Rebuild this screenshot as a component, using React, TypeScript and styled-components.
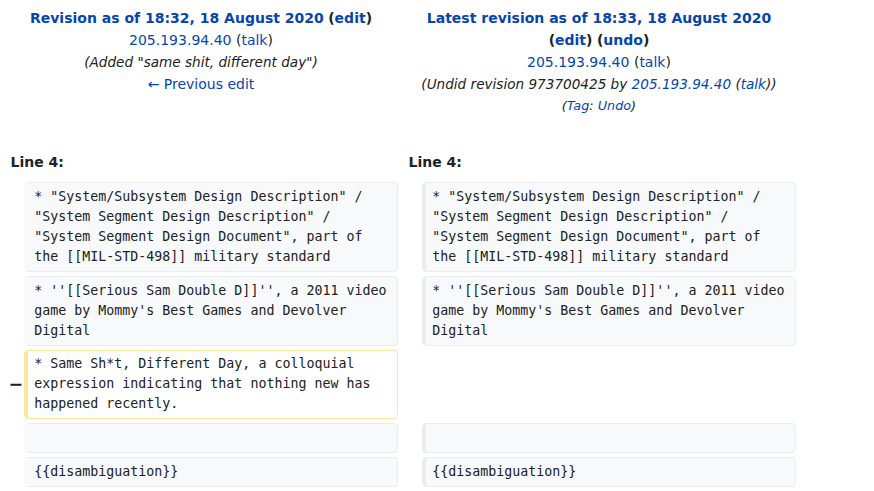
import React from "react";
import styled, { createGlobalStyle, css } from "styled-components";

const GlobalStyle = createGlobalStyle`
  html, body {
    margin: 0;
    padding: 0;
    background: #ffffff;
  }
  body {
    font-family: "DejaVu Sans", "Liberation Sans", sans-serif;
    color: #202122;
  }
`;

const DiffGrid = styled.div`
  display: grid;
  grid-template-columns: 15.6px 374.4px 15.6px 374.4px;
  column-gap: 4px;
  row-gap: 4px;
  padding: 4px;
  width: 792px;
`;

const HeaderCell = styled.div`
  grid-column: span 2;
  text-align: center;
  font-size: 14px;
  line-height: 22px;
  padding: 3px 0 24px;
`;

const HeaderLine = styled.div``;

const Link = styled.a<{ $bold?: boolean }>`
  color: #0645ad;
  text-decoration: none;
  font-weight: ${(p) => (p.$bold ? 700 : 400)};
  cursor: pointer;
`;

const Paren = styled.span<{ $bold?: boolean }>`
  font-weight: ${(p) => (p.$bold ? 700 : 400)};
  color: #202122;
`;

const Comment = styled.span`
  font-style: italic;
  font-size: 13.6px;
  color: #202122;
`;

const TagLine = styled.div`
  font-size: 12.8px;
  font-style: italic;
`;

const LineNo = styled.div`
  grid-column: span 2;
  font-size: 14px;
  font-weight: 700;
  line-height: 22px;
  padding: 6px 0 5px 6.5px;
`;

const Marker = styled.div`
  display: flex;
  align-items: center;
  justify-content: flex-end;
  font-size: 17.5px;
  font-weight: 700;
  color: #202122;
`;

const MarkerGlyph = styled.span`
  margin-right: -3.6px;
`;

type Variant = "contextLeft" | "contextRight" | "deleted";

const variantStyles: Record<Variant, ReturnType<typeof css>> = {
  contextLeft: css`
    background: #f8f9fa;
    border-color: #eaecf0;
    border-left-color: #f8f9fa;
  `,
  contextRight: css`
    background: #f8f9fa;
    border-color: #eaecf0;
  `,
  deleted: css`
    background: #ffffff;
    border-color: #ffe49c;
  `,
};

const Content = styled.div<{ $variant: Variant }>`
  font-family: "DejaVu Sans Mono", "Liberation Mono", monospace;
  font-size: 13.3px;
  line-height: 20px;
  white-space: pre-wrap;
  overflow-wrap: break-word;
  border-style: solid;
  border-width: 1px 1px 1px 4px;
  border-radius: 4.4px;
  padding: 3.9px 6.65px;
  color: #202122;
  ${(p) => variantStyles[p.$variant]}
`;

const Empty = styled.div`
  grid-column: span 2;
`;

const rows: { left: string; right: string | null }[] = [
  {
    left: `* "System/Subsystem Design Description" / "System Segment Design Description" / "System Segment Design Document", part of the [[MIL-STD-498]] military standard`,
    right: `* "System/Subsystem Design Description" / "System Segment Design Description" / "System Segment Design Document", part of the [[MIL-STD-498]] military standard`,
  },
  {
    left: `* ''[[Serious Sam Double D]]'', a 2011 video game by Mommy's Best Games and Devolver Digital`,
    right: `* ''[[Serious Sam Double D]]'', a 2011 video game by Mommy's Best Games and Devolver Digital`,
  },
  {
    left: `* Same Sh*t, Different Day, a colloquial expression indicating that nothing new has happened recently.`,
    right: null,
  },
  { left: "", right: "" },
  { left: "{{disambiguation}}", right: "{{disambiguation}}" },
];

export default function App() {
  return (
    <>
      <GlobalStyle />
      <DiffGrid>
        <HeaderCell>
          <HeaderLine>
            <Link $bold>Revision as of 18:32, 18 August 2020</Link>{" "}
            <Paren $bold>(</Paren>
            <Link $bold>edit</Link>
            <Paren $bold>)</Paren>
          </HeaderLine>
          <HeaderLine>
            <Link>205.193.94.40</Link> <Paren>(</Paren>
            <Link>talk</Link>
            <Paren>)</Paren>
          </HeaderLine>
          <HeaderLine>
            <Comment>(Added "same shit, different day")</Comment>
          </HeaderLine>
          <HeaderLine>
            <Link>← Previous edit</Link>
          </HeaderLine>
        </HeaderCell>
        <HeaderCell>
          <HeaderLine>
            <Link $bold>Latest revision as of 18:33, 18 August 2020</Link>
          </HeaderLine>
          <HeaderLine>
            <Paren $bold>(</Paren>
            <Link $bold>edit</Link>
            <Paren $bold>)</Paren> <Paren $bold>(</Paren>
            <Link $bold>undo</Link>
            <Paren $bold>)</Paren>
          </HeaderLine>
          <HeaderLine>
            <Link>205.193.94.40</Link> <Paren>(</Paren>
            <Link>talk</Link>
            <Paren>)</Paren>
          </HeaderLine>
          <HeaderLine>
            <Comment>
              (Undid revision 973700425 by <Link>205.193.94.40</Link> (
              <Link>talk</Link>))
            </Comment>
          </HeaderLine>
          <TagLine>
            (<Link>Tag</Link>: <Link>Undo</Link>)
          </TagLine>
        </HeaderCell>

        <LineNo>Line 4:</LineNo>
        <LineNo>Line 4:</LineNo>

        {rows.map((row, i) => (
          <React.Fragment key={i}>
            <Marker>
              {row.right === null ? <MarkerGlyph>−</MarkerGlyph> : null}
            </Marker>
            <Content $variant={row.right === null ? "deleted" : "contextLeft"}>
              {row.left === "" ? <br /> : row.left}
            </Content>
            {row.right === null ? (
              <Empty />
            ) : (
              <>
                <Marker />
                <Content $variant="contextRight">
                  {row.right === "" ? <br /> : row.right}
                </Content>
              </>
            )}
          </React.Fragment>
        ))}
      </DiffGrid>
    </>
  );
}
